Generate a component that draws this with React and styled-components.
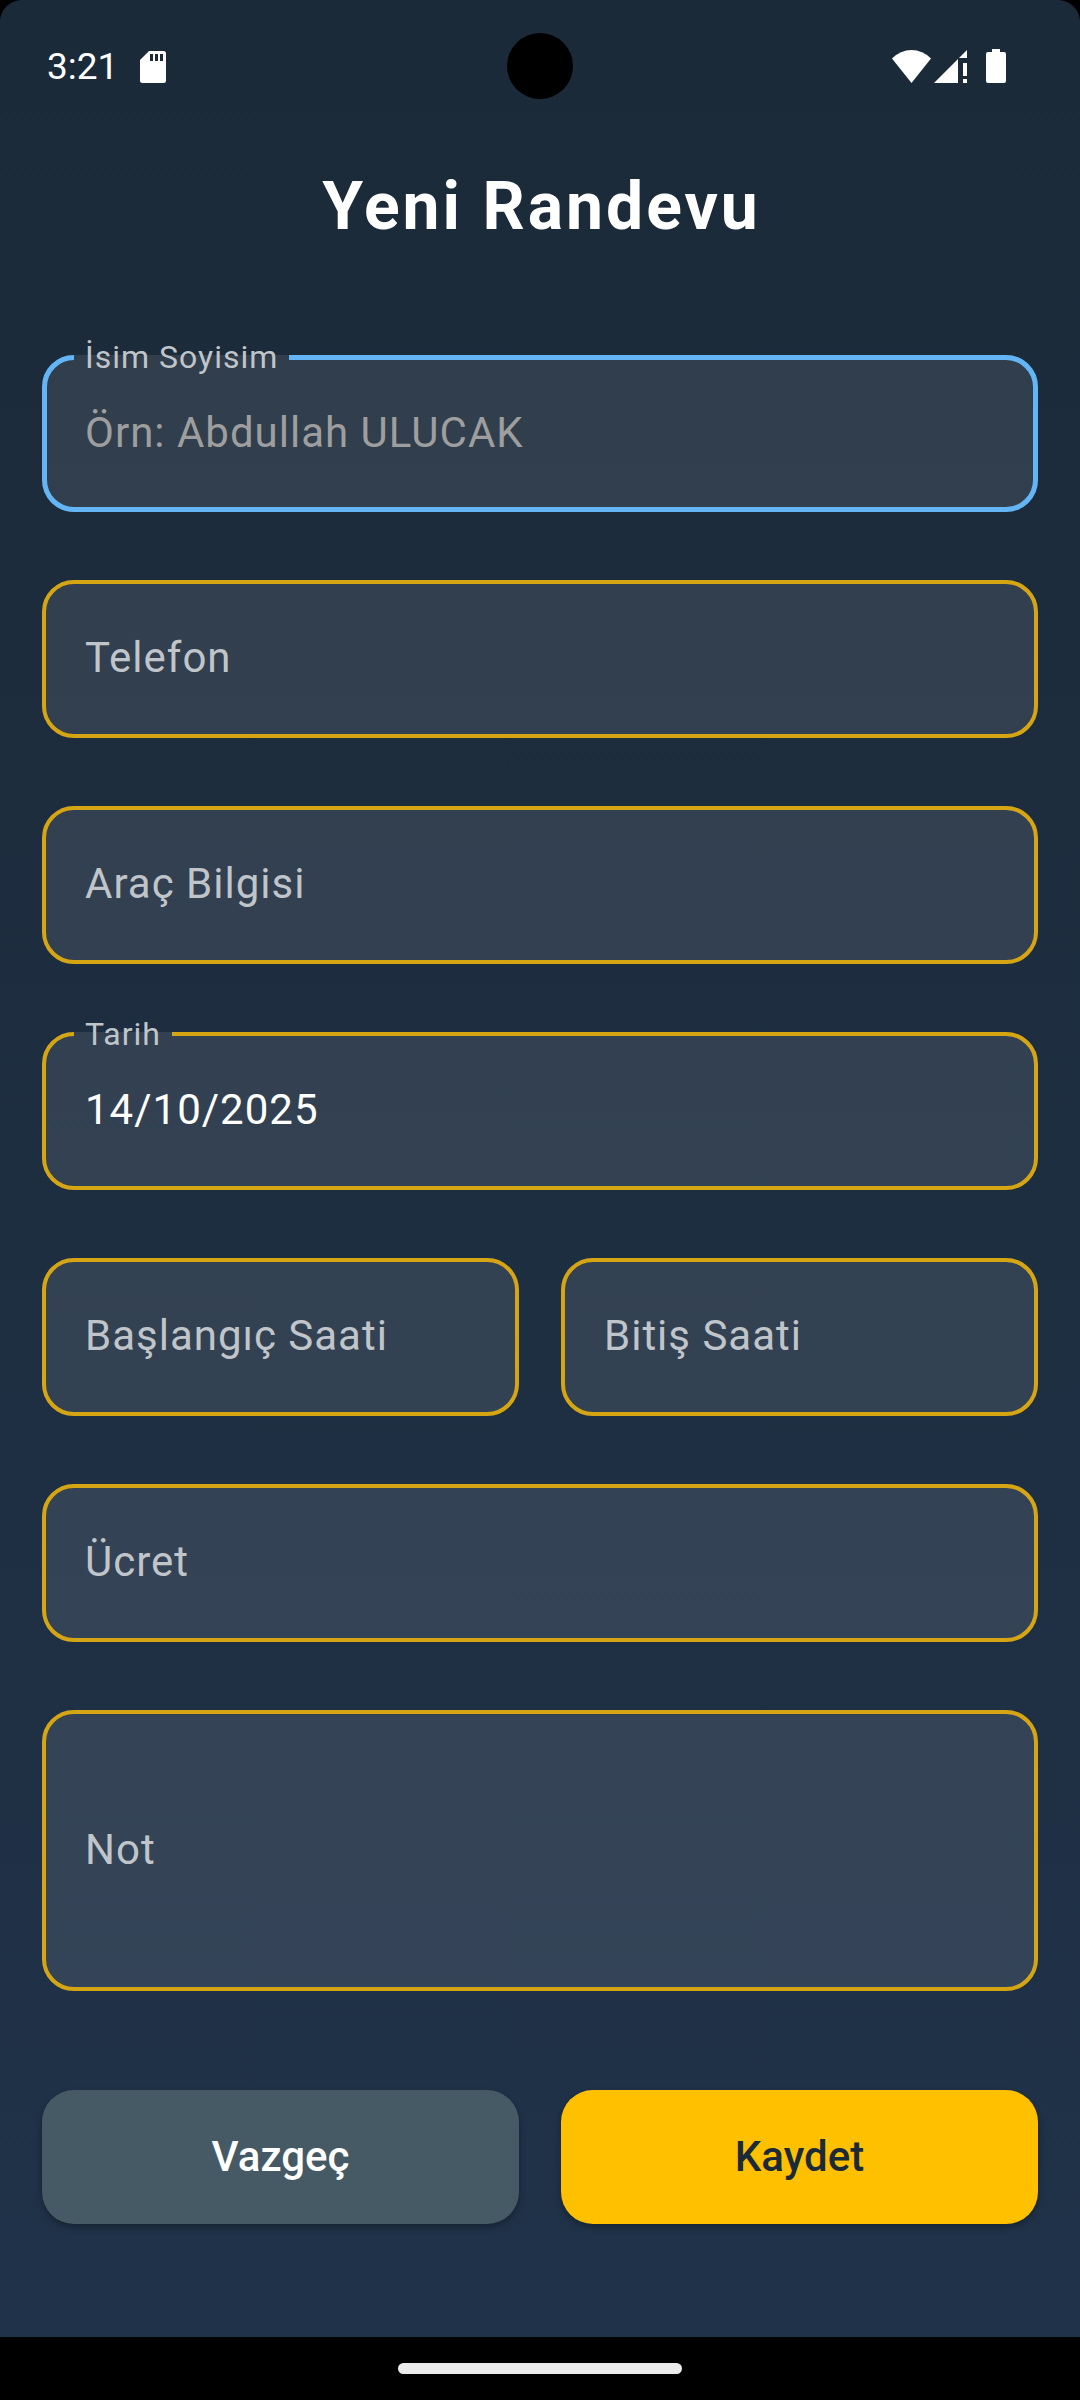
import React, { useState } from "react";
import styled, { createGlobalStyle } from "styled-components";

const GlobalStyle = createGlobalStyle`
  *, *::before, *::after { box-sizing: border-box; }
  body {
    margin: 0;
    background: #000;
    font-family: Roboto, "Noto Sans", sans-serif;
  }
`;

const Page = styled.div`
  display: flex;
  flex-direction: column;
  min-height: 100vh;
`;

const Screen = styled.div`
  flex: 1;
  display: flex;
  flex-direction: column;
  border-radius: 22px 22px 0 0;
  background: linear-gradient(#1b2a38, #203249);
`;

const StatusBar = styled.header`
  display: grid;
  grid-template-columns: 1fr auto 1fr;
  align-items: center;
  padding: 33px 47px 0;
  color: #fff;
`;

const StatusGroup = styled.div`
  display: flex;
  align-items: center;
  justify-content: ${(p) => (p.$end ? "flex-end" : "flex-start")};
  gap: ${(p) => (p.$end ? 3 : 22)}px;
  padding: ${(p) => (p.$end ? "0 27px 0 0" : "2px 0 0")};
`;

const Clock = styled.time`
  font-size: 37px;
  line-height: 44px;
`;

const Camera = styled.div`
  width: 66px;
  height: 66px;
  border-radius: 50%;
  background: #000;
`;

const Glyph = styled.svg`
  display: block;
  fill: currentColor;
  margin-left: ${(p) => (p.$spaced ? 16 : 0)}px;
`;

const Title = styled.h1`
  margin: 70px 0 0;
  text-align: center;
  text-indent: 3px;
  color: #fff;
  font-size: 66px;
  font-weight: 700;
  line-height: 76px;
  letter-spacing: 3px;
`;

const Form = styled.form`
  display: flex;
  flex-direction: column;
  gap: 68px;
  padding: 110px 42px 0;
`;

const Row = styled.div`
  display: grid;
  grid-template-columns: 1fr 1fr;
  gap: 42px;
`;

const Actions = styled(Row)`
  margin-top: 31px;
`;

const Outline = styled.fieldset`
  min-width: 0;
  margin: ${(p) => (p.$floating ? "-16px" : "0")} 0 0;
  padding: ${(p) => (p.$floating ? "0" : "16px")} 0 ${(p) => (p.$active ? "14px" : "16px")};
  border: ${(p) => (p.$active ? "5px solid #64b5f6" : "4px solid #d6a513")};
  border-radius: 32px;
  background: rgba(255, 255, 255, 0.094);
`;

const Legend = styled.legend`
  margin-left: ${(p) => (p.$active ? 27 : 28)}px;
  padding: 0 11px;
  font-size: 32px;
  line-height: 36px;
  letter-spacing: 1px;
  color: #c0c5ca;
`;

const Cell = styled.div`
  display: grid;
  align-items: center;
  font-size: 42px;
  line-height: 50px;
  letter-spacing: 1px;

  & > * { grid-area: 1 / 1; }
`;

const RestingLabel = styled.label`
  padding: 0 39px 2px;
  color: #c0c5ca;
  pointer-events: none;
`;

const Control = styled.input`
  display: block;
  width: 100%;
  min-width: 0;
  height: ${(p) => (p.$tall ? 241 : 118)}px;
  padding: 32px ${(p) => (p.$active ? 38 : 39)}px 36px;
  border: 0;
  outline: 0;
  resize: none;
  background: none;
  color: #fff;
  font: inherit;
  letter-spacing: inherit;

  &::placeholder { color: #9e9e9e; opacity: 1; }
`;

const Button = styled.button`
  padding: 42px 24px;
  border: 0;
  border-radius: 32px;
  background: ${(p) => (p.$primary ? "#ffc000" : "#455a64")};
  color: ${(p) => (p.$primary ? "#1c2a38" : "#fff")};
  box-shadow: 0 3px 6px rgba(0, 0, 0, 0.3);
  font-family: inherit;
  font-size: 42px;
  font-weight: 500;
  line-height: 50px;
  cursor: pointer;
`;

const NavBar = styled.footer`
  display: flex;
  justify-content: center;
  align-items: center;
  height: 63px;
`;

const Handle = styled.div`
  width: 284px;
  height: 11px;
  border-radius: 6px;
  background: #ececec;
`;

function Field({ id, label, hint, tall, form }) {
  const { values, active, setActive, setValue } = form;
  const value = values[id] || "";
  const isActive = active === id;
  const floating = isActive || value !== "";
  return (
    <Outline $active={isActive} $floating={floating}>
      {floating && (
        <Legend $active={isActive}>
          <label htmlFor={id}>{label}</label>
        </Legend>
      )}
      <Cell>
        <Control
          as={tall ? "textarea" : "input"}
          id={id}
          name={id}
          $tall={tall}
          $active={isActive}
          value={value}
          placeholder={isActive ? hint : undefined}
          onFocus={() => setActive(id)}
          onBlur={() => setActive(null)}
          onChange={(e) => setValue(id, e.target.value)}
        />
        {!floating && <RestingLabel htmlFor={id}>{label}</RestingLabel>}
      </Cell>
    </Outline>
  );
}

export default function App() {
  const [active, setActive] = useState("name");
  const [values, setValues] = useState({ date: "14/10/2025" });
  const setValue = (id, value) => setValues((v) => ({ ...v, [id]: value }));
  const form = { values, active, setActive, setValue };

  return (
    <>
      <GlobalStyle />
      <Page>
        <Screen>
          <StatusBar>
            <StatusGroup>
              <Clock>3:21</Clock>
              <Glyph width="26" height="32" viewBox="0 0 26 32" aria-hidden="true">
                <path
                  fillRule="evenodd"
                  d="M9 0H23.5Q26 0 26 2.5V29.500Q26 32 23.5 32H2.500Q0 32 0 29.500V9ZM10 3V10H13V3ZM15 3V10H18V3ZM20 3V10H23V3Z"
                />
              </Glyph>
            </StatusGroup>
            <Camera />
            <StatusGroup $end>
              <Glyph width="39" height="33" viewBox="0 0 39 33" aria-hidden="true">
                <path d="M0 8.500Q8.500 0 19.500 0T39 8.500L19.500 33Z" />
              </Glyph>
              <Glyph width="33" height="33" viewBox="0 0 33 33" aria-hidden="true">
                <path d="M0 33L24 9V33ZM25 8L33 0V8ZM29 13H33V26H29ZM29 29H33V33H29Z" />
              </Glyph>
              <Glyph $spaced width="20" height="34" viewBox="0 0 20 34" aria-hidden="true">
                <path d="M6 0H14V3H18Q20 3 20 5V32Q20 34 18 34H2Q0 34 0 32V5Q0 3 2 3H6Z" />
              </Glyph>
            </StatusGroup>
          </StatusBar>

          <Title>Yeni Randevu</Title>

          <Form onSubmit={(e) => e.preventDefault()}>
            <Field id="name" label="İsim Soyisim" hint="Örn: Abdullah ULUCAK" form={form} />
            <Field id="phone" label="Telefon" form={form} />
            <Field id="vehicle" label="Araç Bilgisi" form={form} />
            <Field id="date" label="Tarih" form={form} />
            <Row>
              <Field id="start" label="Başlangıç Saati" form={form} />
              <Field id="end" label="Bitiş Saati" form={form} />
            </Row>
            <Field id="fee" label="Ücret" form={form} />
            <Field id="note" label="Not" tall form={form} />
            <Actions>
              <Button type="button">Vazgeç</Button>
              <Button type="submit" $primary>
                Kaydet
              </Button>
            </Actions>
          </Form>
        </Screen>
        <NavBar>
          <Handle />
        </NavBar>
      </Page>
    </>
  );
}
